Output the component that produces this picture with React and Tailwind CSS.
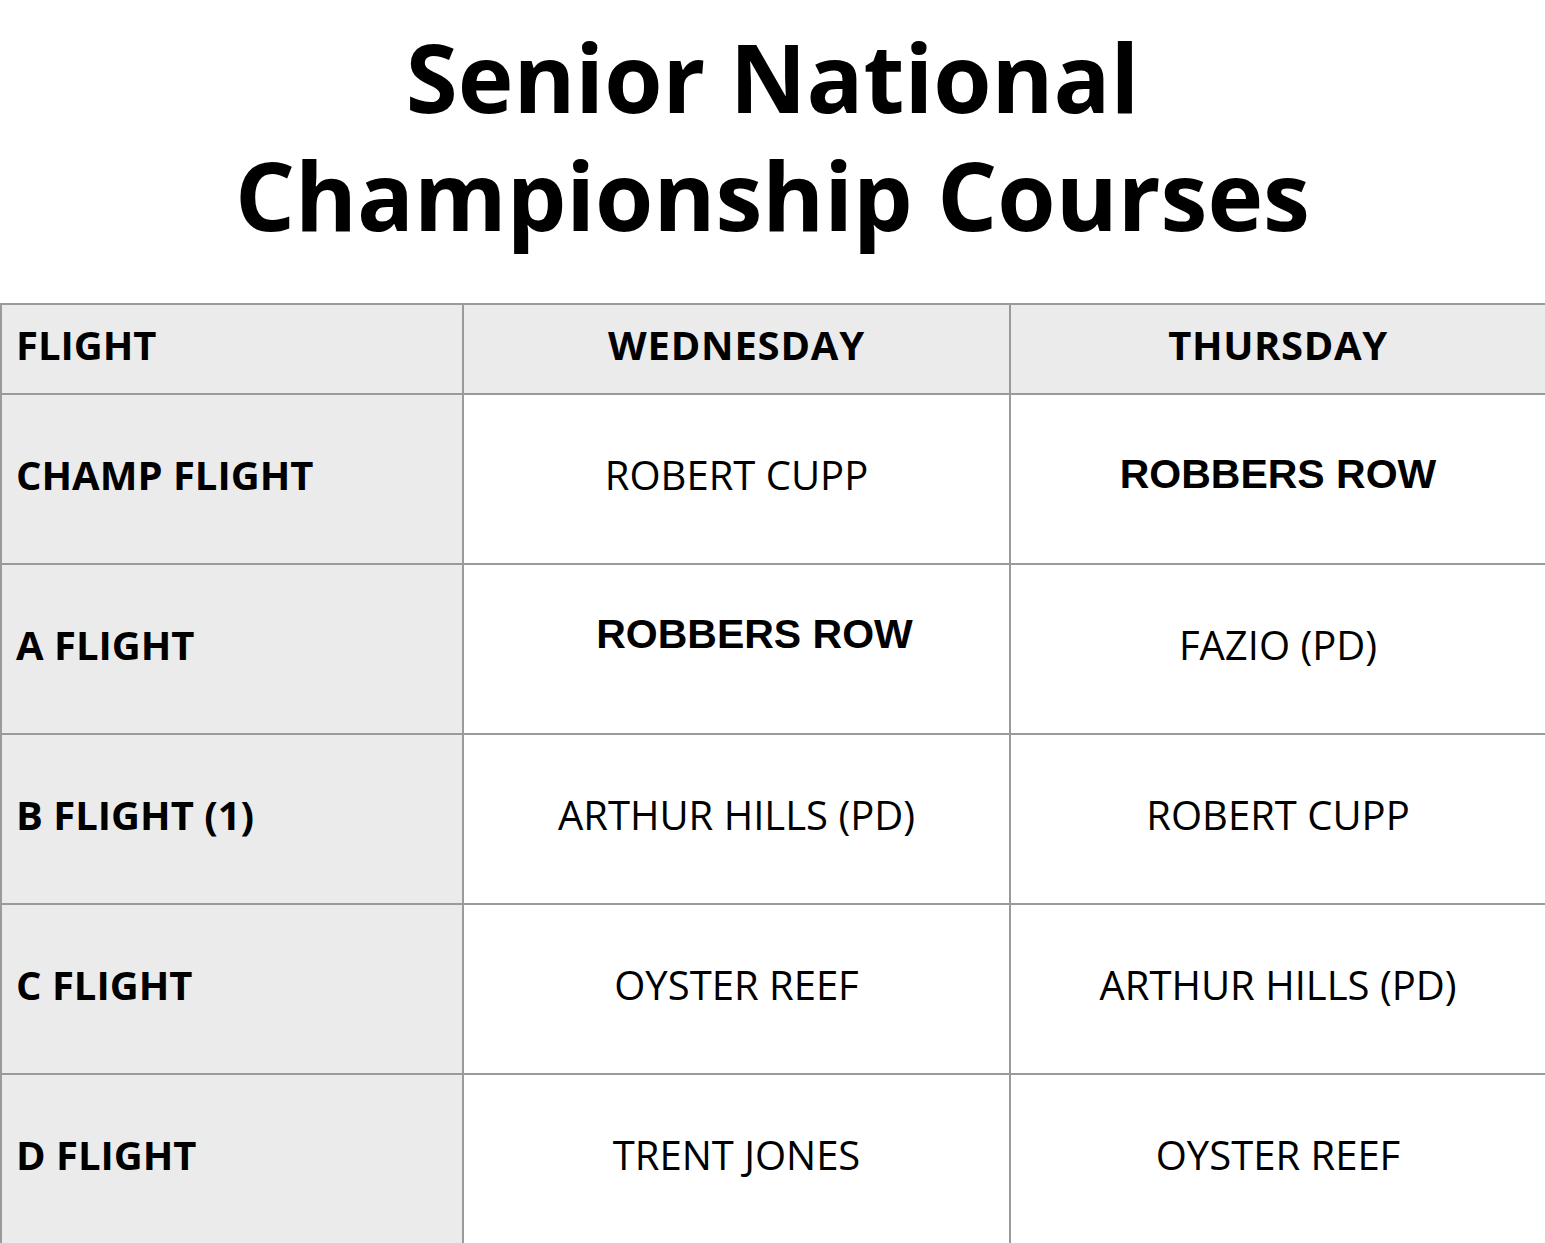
export default function App() {
  const rows = [
    ["CHAMP FLIGHT", { t: "ROBERT CUPP" }, { t: "ROBBERS ROW", arial: true }],
    ["A FLIGHT", { t: "ROBBERS ROW", arial: true, shift: true }, { t: "FAZIO (PD)" }],
    ["B FLIGHT (1)", { t: "ARTHUR HILLS (PD)" }, { t: "ROBERT CUPP" }],
    ["C FLIGHT", { t: "OYSTER REEF" }, { t: "ARTHUR HILLS (PD)" }],
    ["D FLIGHT", { t: "TRENT JONES" }, { t: "OYSTER REEF" }],
  ];
  const cellCls = (c) => {
    let cls = "border-2 border-[#9a9a9a] text-center align-middle text-black ";
    if (c.arial) {
      cls += "font-['Liberation_Sans',Arial,sans-serif] font-bold text-[41px] ";
    } else {
      cls += "font-['Open_Sans',sans-serif] font-normal text-[40px] ";
    }
    if (c.shift) cls += "pl-[36px] pb-[28px] ";
    else cls += "pb-[8px] ";
    return cls;
  };
  return (
    <div className="bg-white w-[1545px] min-h-[1243px] font-['Open_Sans',sans-serif]">
      <h1 className="pt-[18px] text-center font-['Open_Sans',sans-serif] font-bold text-[94.3px] leading-[118px] text-black">
        Senior National
        <br />
        Championship Courses
      </h1>
      <table className="mt-[49px] w-[1545px] border-collapse table-fixed">
        <colgroup>
          <col className="w-[462px]" />
          <col className="w-[547px]" />
          <col className="w-[536px]" />
        </colgroup>
        <thead>
          <tr className="h-[90px] bg-[#ebebeb]">
            <th className="border-2 border-[#9a9a9a] text-left pl-[14px] pb-[8px] font-['Open_Sans',sans-serif] font-bold text-[40px] text-black">
              FLIGHT
            </th>
            <th className="border-2 border-[#9a9a9a] text-center pb-[8px] font-['Open_Sans',sans-serif] font-bold text-[40px] tracking-[0.8px] text-black">
              WEDNESDAY
            </th>
            <th className="border-2 border-[#9a9a9a] text-center pb-[8px] font-['Open_Sans',sans-serif] font-bold text-[40px] tracking-[0.6px] text-black">
              THURSDAY
            </th>
          </tr>
        </thead>
        <tbody>
          {rows.map((r, i) => (
            <tr key={i} className="h-[170px]">
              <td className="border-2 border-[#9a9a9a] bg-[#ebebeb] text-left pl-[14px] pb-[8px] font-['Open_Sans',sans-serif] font-bold text-[40px] text-black">
                {r[0]}
              </td>
              <td className={cellCls(r[1])}>{r[1].t}</td>
              <td className={cellCls(r[2])}>{r[2].t}</td>
            </tr>
          ))}
        </tbody>
      </table>
    </div>
  );
}
